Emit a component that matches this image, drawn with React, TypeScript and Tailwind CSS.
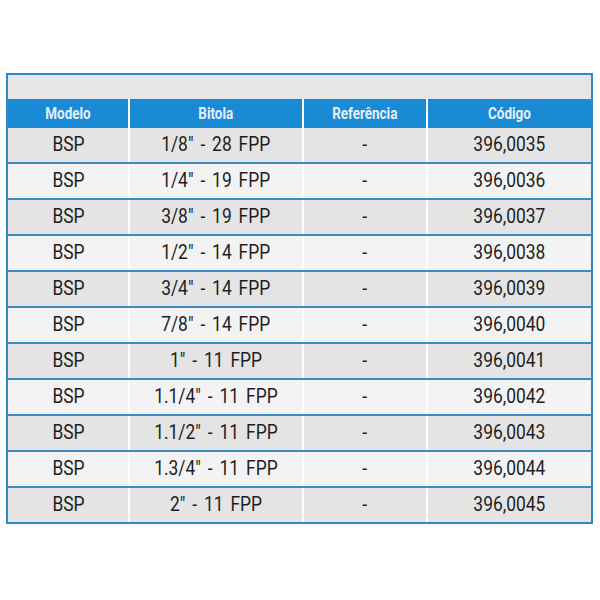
import React from 'react';

const ROWS = [
  { bitola: '1/8" - 28 FPP', codigo: '396,0035' },
  { bitola: '1/4" - 19 FPP', codigo: '396,0036' },
  { bitola: '3/8" - 19 FPP', codigo: '396,0037' },
  { bitola: '1/2" - 14 FPP', codigo: '396,0038' },
  { bitola: '3/4" - 14 FPP', codigo: '396,0039' },
  { bitola: '7/8" - 14 FPP', codigo: '396,0040' },
  { bitola: '1" - 11 FPP', codigo: '396,0041' },
  { bitola: '1.1/4" - 11 FPP', codigo: '396,0042' },
  { bitola: '1.1/2" - 11 FPP', codigo: '396,0043' },
  { bitola: '1.3/4" - 11 FPP', codigo: '396,0044' },
  { bitola: '2" - 11 FPP', codigo: '396,0045' },
];

const COLS = ['w-[122px]', 'w-[174px]', 'w-[124px]', 'w-[163px]'];

function Cell({ i, children, head }: { i: number; children: React.ReactNode; head?: boolean }) {
  return (
    <div
      className={`${COLS[i]} flex items-center justify-center ${i < 3 ? 'border-r-2 border-white' : ''}`}
    >
      <span
        className={`inline-block whitespace-nowrap ${
          head
            ? 'scale-x-[0.84] text-[16px] font-bold text-[#e3f1fc]'
            : 'scale-x-[0.87] text-[20px] text-[#1e1e1e] -mt-[3px] [word-spacing:3px]'
        }`}
      >
        {children}
      </span>
    </div>
  );
}

export default function App() {
  return (
    <div className="w-[600px] h-[600px] bg-white pt-[73px] pl-[6px] font-['Roboto',sans-serif]">
      <div className="w-[587px] border-2 border-[#3187c2]">
        <div className="h-[24px] bg-[#e6e6e6]" />

        {/* header */}
        <div className="flex h-[29px] bg-[#1b8ad4]">
          <Cell i={0} head>Modelo</Cell>
          <Cell i={1} head>Bitola</Cell>
          <Cell i={2} head>Referência</Cell>
          <Cell i={3} head>Código</Cell>
        </div>

        {ROWS.map((r, idx) => (
          <div
            key={r.codigo}
            className={`flex ${idx === 0 ? 'h-[34px]' : 'h-[36px] border-t-2 border-[#3a8cc2]'} ${
              idx % 2 === 0 ? 'bg-[#e4e4e4]' : 'bg-[#f3f3f3]'
            }`}
          >
            <Cell i={0}>BSP</Cell>
            <Cell i={1}>{r.bitola}</Cell>
            <Cell i={2}>-</Cell>
            <Cell i={3}>{r.codigo}</Cell>
          </div>
        ))}
      </div>
    </div>
  );
}
